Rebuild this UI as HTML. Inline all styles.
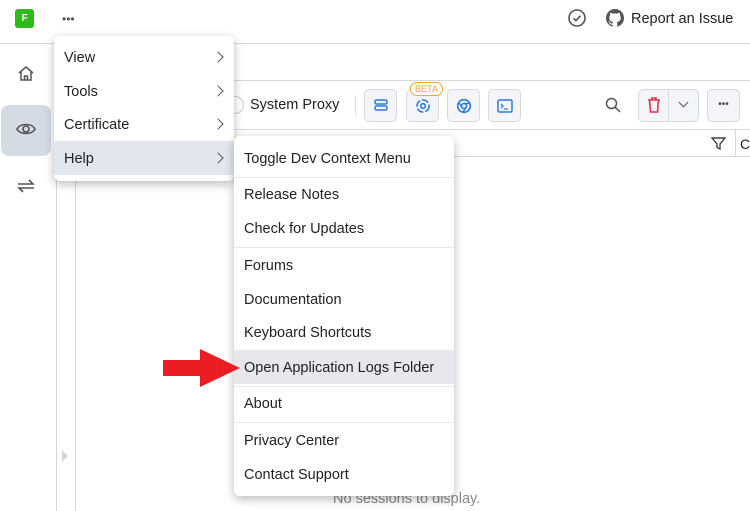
<!DOCTYPE html>
<html><head><style>
*{box-sizing:border-box;margin:0;padding:0}
body{width:750px;height:511px;overflow:hidden;background:#fff;font-family:"Liberation Sans",sans-serif;color:#222;position:relative;font-size:14.5px}
.a{position:absolute}
.btn{position:absolute;top:89px;width:33px;height:33px;border:1px solid #d5d9e2;border-radius:5px;background:#f3f5f9}
.menu{position:absolute;background:#fff;border-radius:6px;box-shadow:0 3px 10px rgba(0,0,0,.28)}
.it{position:absolute;left:0;right:0;height:34px;line-height:36px;padding-left:10px;font-size:14.5px;color:#222}
.sep{position:absolute;left:0;right:0;height:1px;background:#e6e8ec}
.chev{position:absolute;right:12px;top:13px;width:8px;height:8px;border-right:1.5px solid #555;border-top:1.5px solid #555;transform:rotate(45deg)}
</style></head><body>
<div class="a" style="left:15px;top:9px;width:19px;height:19px;background:#2dbb1a;border-radius:3px;color:#fff;font-size:10px;font-weight:bold;text-align:center;line-height:19px">F</div>
<div class="a" style="left:62px;top:12px;font-size:12px;color:#555">•••</div>
<div class="a" style="left:0;top:43px;width:750px;height:1px;background:#d5d8de"></div>
<svg class="a" style="left:567px;top:8px" width="20" height="20" viewBox="0 0 20 20"><circle cx="10" cy="10" r="8" fill="none" stroke="#555" stroke-width="1.6"/><path d="M6.5 10.2l2.4 2.4 4.6-4.8" fill="none" stroke="#555" stroke-width="1.6"/></svg>
<svg class="a" style="left:606px;top:9px" width="18" height="18" viewBox="0 0 16 16"><path fill="#555" d="M8 0C3.58 0 0 3.58 0 8c0 3.54 2.290 6.530 5.470 7.590.4.07.55-.17.55-.38v-1.33c-2.23.48-2.7-1.07-2.7-1.07-.36-.93-.89-1.170-.89-1.170-.73-.5.06-.49.06-.49.8.06 1.230.83 1.230.83.71 1.220 1.870.87 2.330.66.07-.52.28-.87.5-1.070-1.780-.2-3.640-.89-3.640-3.950 0-.87.31-1.590.82-2.150-.08-.2-.36-1.020.08-2.120 0 0 .67-.21 2.2.82a7.6 7.6 0 014 0c1.530-1.040 2.2-.82 2.2-.82.44 1.1.16 1.920.08 2.120.51.56.82 1.270.82 2.150 0 3.070-1.870 3.750-3.650 3.950.29.25.54.73.54 1.480v2.2c0 .21.15.46.55.38A8 8 0 0016 8c0-4.420-3.580-8-8-8z"/></svg>
<div class="a" style="left:631px;top:11px;font-size:14.5px">Report an Issue</div>
<div class="a" style="left:56px;top:44px;width:1px;height:467px;background:#d5d8e2"></div>
<div class="a" style="left:75px;top:80px;width:1px;height:431px;background:#d5d8e2"></div>
<svg class="a" style="left:17px;top:65px" width="18" height="18" viewBox="0 0 18 18"><path d="M2 8L9 2l7 6M4 7v8h10V7M7.5 15v-4h3v4" fill="none" stroke="#555" stroke-width="1.5"/></svg>
<div class="a" style="left:1px;top:105px;width:50px;height:51px;background:#d5dbe5;border-radius:8px"></div>
<svg class="a" style="left:16px;top:121px" width="20" height="16" viewBox="0 0 20 16"><path d="M1 8C4 2 16 2 19 8 16 14 4 14 1 8z" fill="none" stroke="#555" stroke-width="1.6"/><circle cx="10" cy="8" r="3" fill="none" stroke="#555" stroke-width="1.6"/></svg>
<svg class="a" style="left:16px;top:177px" width="20" height="18" viewBox="0 0 20 18"><path d="M2 7h15l-4-4M18 11H3l4 4" fill="none" stroke="#555" stroke-width="1.6"/></svg>
<div class="a" style="left:62px;top:450px;width:0;height:0;border-left:6px solid #cfd5e0;border-top:6px solid transparent;border-bottom:6px solid transparent"></div>
<div class="a" style="left:75px;top:80px;width:675px;height:1px;background:#d5d8e2"></div>
<div class="a" style="left:226px;top:96px;width:18px;height:18px;border:1px solid #ccc;border-radius:50%"></div>
<div class="a" style="left:250px;top:97px;font-size:14.5px">System Proxy</div>
<div class="a" style="left:355px;top:95px;width:1px;height:20px;background:#ddd"></div>
<div class="btn" style="left:364px"><svg style="margin:8px 9px" width="14" height="14" viewBox="0 0 14 14"><rect x="1" y="2" width="12" height="4" rx="1.5" fill="none" stroke="#2a7be4" stroke-width="1.5"/><rect x="1" y="8" width="12" height="4" rx="1.5" fill="none" stroke="#2a7be4" stroke-width="1.5"/></svg></div>
<div class="btn" style="left:406px"><svg style="margin:8px 8px" width="16" height="16" viewBox="0 0 16 16"><circle cx="8" cy="8" r="6" fill="none" stroke="#2a7be4" stroke-width="1.6" stroke-dasharray="7 2"/><circle cx="8" cy="8" r="2.3" fill="none" stroke="#2a7be4" stroke-width="1.6"/></svg></div>
<div class="a" style="left:410px;top:82px;height:14px;padding:0 4px;border:1px solid #f5a623;border-radius:7px;background:#fff;color:#f5a623;font-size:9px;line-height:12px">BETA</div>
<div class="btn" style="left:447px"><svg style="margin:8px 8px" width="16" height="16" viewBox="0 0 16 16"><circle cx="8" cy="8" r="6.3" fill="none" stroke="#2a7be4" stroke-width="1.6"/><circle cx="8" cy="8" r="2.5" fill="none" stroke="#2a7be4" stroke-width="1.6"/><path d="M8 5.5h6M5.8 9.3L2.8 4.2M10.2 9.3L7 14" stroke="#2a7be4" stroke-width="1.4"/></svg></div>
<div class="btn" style="left:488px"><svg style="margin:8px 8px" width="16" height="16" viewBox="0 0 16 16"><rect x="1" y="2" width="14" height="12" rx="1.5" fill="none" stroke="#2a7be4" stroke-width="1.5"/><path d="M4 6l2 2-2 2M7 11h4" fill="none" stroke="#2a7be4" stroke-width="1.3"/></svg></div>
<svg class="a" style="left:605px;top:97px" width="16" height="16" viewBox="0 0 16 16"><circle cx="6.5" cy="6.5" r="5" fill="none" stroke="#555" stroke-width="1.5"/><path d="M10.3 10.3L15 15" stroke="#555" stroke-width="1.5"/></svg>
<div class="a" style="left:638px;top:89px;width:61px;height:33px;border:1px solid #d5d9e2;border-radius:5px;background:#f3f5f9"></div>
<div class="a" style="left:668px;top:89px;width:1px;height:33px;background:#d5d9e2"></div>
<svg class="a" style="left:646px;top:96px" width="16" height="18" viewBox="0 0 16 18"><path d="M2 4h12M6 4V2h4v2M3.5 4l1 12h7l1-12" fill="none" stroke="#e0344a" stroke-width="1.6"/></svg>
<div class="a" style="left:680px;top:99px;width:7px;height:7px;border-right:1.5px solid #555;border-bottom:1.5px solid #555;transform:rotate(45deg)"></div>
<div class="a" style="left:707px;top:89px;width:33px;height:33px;border:1px solid #d5d9e2;border-radius:5px;background:#f3f5f9;text-align:center;font-size:10px;line-height:30px;color:#444">•••</div>
<div class="a" style="left:75px;top:129px;width:675px;height:1px;background:#d5d8e2"></div>
<div class="a" style="left:75px;top:156px;width:675px;height:1px;background:#d5d8e2"></div>
<svg class="a" style="left:711px;top:136px" width="15" height="15" viewBox="0 0 15 15"><path d="M1 2h13L9 8v5l-3-1.5V8z" fill="none" stroke="#444" stroke-width="1.4"/></svg>
<div class="a" style="left:735px;top:130px;width:1px;height:26px;background:#d5d8e2"></div>
<div class="a" style="left:740px;top:136px;font-size:14px">C</div>
<div class="a" style="left:333px;top:491px;font-size:14.5px;color:#888">No sessions to display.</div>
<div class="menu" style="left:54px;top:36px;width:180px;height:145px;overflow:hidden">
<div class="it" style="top:4px">View<span class="chev"></span></div>
<div class="it" style="top:38px">Tools<span class="chev"></span></div>
<div class="it" style="top:71px">Certificate<span class="chev"></span></div>
<div class="it" style="top:105px;background:#e2e6ef">Help<span class="chev"></span></div>
</div>
<div class="menu" style="left:234px;top:136px;width:220px;height:360px">
<div class="it" style="top:5px">Toggle Dev Context Menu</div>
<div class="sep" style="top:41px"></div>
<div class="it" style="top:41px">Release Notes</div>
<div class="it" style="top:75px">Check for Updates</div>
<div class="sep" style="top:111px"></div>
<div class="it" style="top:112px">Forums</div>
<div class="it" style="top:146px">Documentation</div>
<div class="it" style="top:179px">Keyboard Shortcuts</div>
<div class="it" style="top:214px;background:#e6e8ec">Open Application Logs Folder</div>
<div class="sep" style="top:250px"></div>
<div class="it" style="top:250px">About</div>
<div class="sep" style="top:286px"></div>
<div class="it" style="top:287px">Privacy Center</div>
<div class="it" style="top:321px">Contact Support</div>
</div>
<svg class="a" style="left:163px;top:349px" width="78" height="38" viewBox="0 0 78 38"><path d="M0 11h37V0l40 19-40 19V27H0z" fill="#ec1c24"/></svg>
</body></html>
